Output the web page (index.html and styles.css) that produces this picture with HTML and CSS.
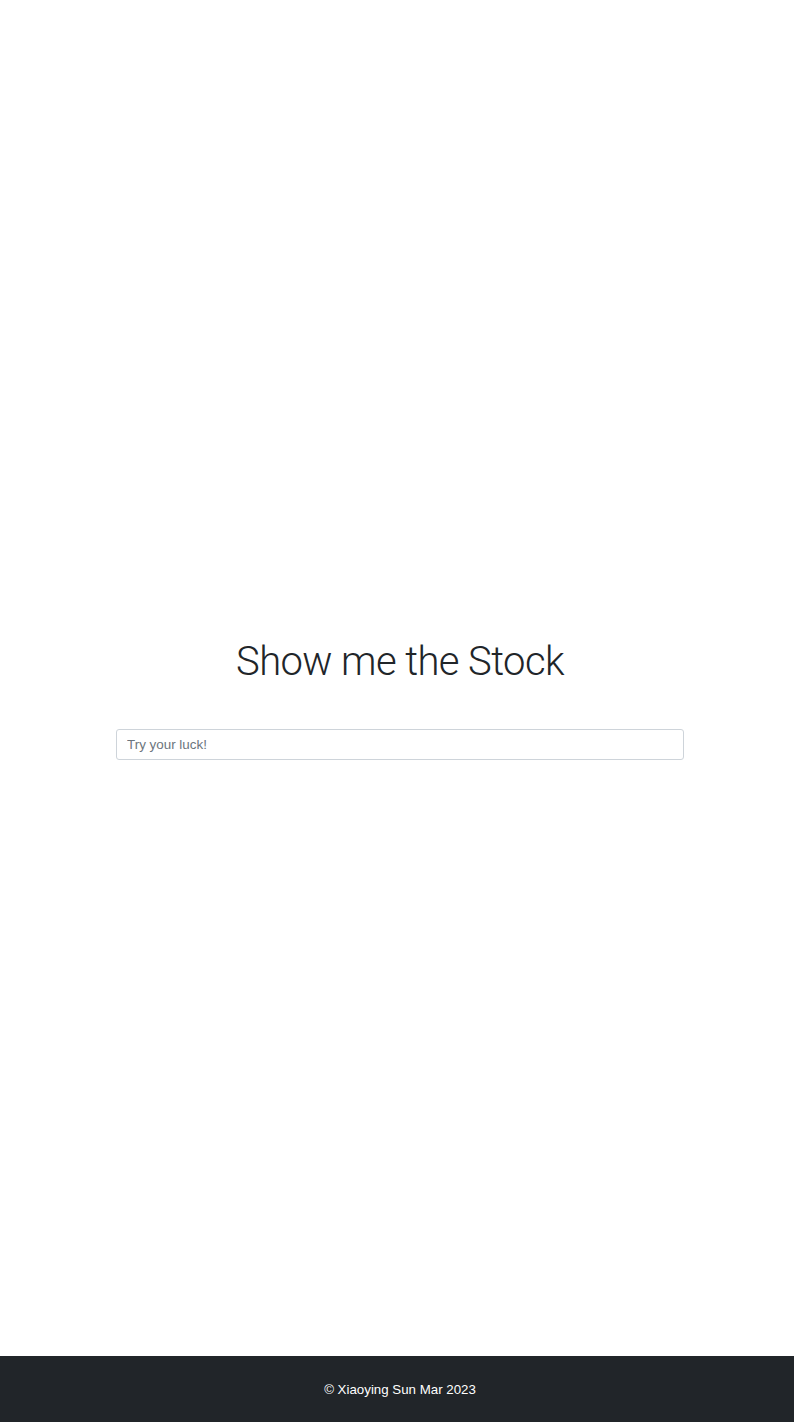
FILE: index.html
```html
<!DOCTYPE html>
<html lang="en">
<head>
<meta charset="utf-8">
<title>Show me the Stock</title>
<link rel="stylesheet" href="styles.css">
</head>
<body>
<div class="page">
  <main class="main">
    <h1 class="title">Show me the Stock</h1>
    <form class="search">
      <input class="search-input" type="text" placeholder="Try your luck!">
    </form>
  </main>
  <footer class="footer">
    <p class="footer-text">© Xiaoying Sun Mar 2023</p>
  </footer>
</div>
</body>
</html>
```

FILE: styles.css
```css
* { box-sizing: border-box; }
html, body {
  margin: 0;
  padding: 0;
  background: #fff;
}
body {
  font-family: "Liberation Sans", Arial, sans-serif;
  color: #212529;
}
.page {
  display: flex;
  flex-direction: column;
  min-height: 1422px;
}
.main {
  flex: 1;
  display: flex;
  flex-direction: column;
  align-items: center;
  padding-top: 638px;
  padding-left: 6px;
}
.title {
  margin: 0;
  font-family: Roboto, "Liberation Sans", sans-serif;
  font-weight: 300;
  font-size: 40px;
  line-height: 48px;
  color: #212529;
  letter-spacing: -0.6px;
}
.search {
  margin-top: 43px;
  width: 568px;
}
.search-input {
  display: block;
  width: 100%;
  height: 31px;
  padding: 4px 10px;
  font-family: "Liberation Sans", Arial, sans-serif;
  font-size: 13.4px;
  color: #495057;
  background: #fff;
  border: 1px solid #ced4da;
  border-radius: 3px;
  outline: none;
}
.search-input::placeholder {
  color: #6c757d;
}
.footer {
  height: 66px;
  background: #212529;
  display: flex;
  align-items: center;
  justify-content: center;
  padding-left: 6px;
}
.footer-text {
  margin: 0;
  color: #fff;
  font-size: 13.3px;
}
```
